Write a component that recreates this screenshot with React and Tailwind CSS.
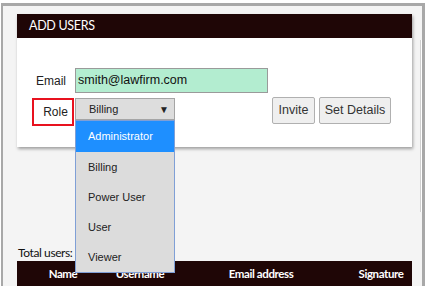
import React from 'react';

const ROLES = ['Administrator', 'Billing', 'Power User', 'User', 'Viewer'];

const COLUMNS = [
  { label: 'Name', className: 'w-[92px]' },
  { label: 'Username', className: 'w-[62px]' },
  { label: 'Email address', className: 'w-[180px]' },
  { label: 'Signature', className: 'w-[60px]' },
];

const App = () => {
  return (
    <div className="w-[427px] h-[286px] bg-white pt-[3px] pl-[1px] pr-[2px] overflow-hidden flex">
      {/* Window frame */}
      <div className="flex-1 flex border-t-[3px] border-l-[2px] border-r-[3px] border-[#a8a8a8] bg-[#f4f4f4] pt-[8px] pl-[14px]">
        <div className="w-[395px] flex flex-col" style={{ fontFamily: 'Lato, "Open Sans", sans-serif' }}>
          {/* Add users panel */}
          <section className="bg-white shadow-[1px_2px_3px_rgba(0,0,0,0.35)]">
            <header className="h-[24px] bg-[#1f0606] pl-[12px] flex items-center">
              <h2 className="text-white text-[12.5px] tracking-[-0.3px]">ADD USERS</h2>
            </header>

            <div
              className="h-[109px] pt-[30px] pl-[15px] flex flex-col gap-[5px]"
              style={{ fontFamily: '"Liberation Sans", Arial, sans-serif' }}
            >
              <div className="flex items-center">
                <label className="w-[42px] pr-[8px] text-right text-[12px] text-[#222]">Email</label>
                <div className="ml-[1px] w-[193px] h-[25px] bg-[#b3edd0] border border-[#9a9a9a] pl-[2px] flex items-center text-[12.5px] text-[#111]">
                  smith@lawfirm.com
                </div>
              </div>

              <div className="flex items-start">
                <div className="w-[42px] h-[28px] border-2 border-[#e8121f] flex items-center justify-center text-[12px] text-[#222] pl-[5px]">
                  Role
                </div>

                {/* Open select */}
                <div className="relative ml-[1px] w-[100px]">
                  <div className="h-[22px] bg-[#dddddd] border border-[#a5a5a5] pl-[13px] pr-[5px] flex items-center justify-between text-[11px] text-[#222]">
                    <span>Billing</span>
                    <span className="text-[10px] text-[#222]">▼</span>
                  </div>
                  <ul className="absolute z-10 top-[22px] left-0 w-[100px] bg-[#dcdcdc] border border-[#7f9fd6] text-[11px] text-[#222]">
                    {ROLES.map((role, i) => (
                      <li
                        key={role}
                        className={
                          i === 0
                            ? 'h-[31px] bg-[#1e8fff] text-white pl-[12px] flex items-center'
                            : 'h-[30px] pl-[12px] flex items-center'
                        }
                      >
                        {role}
                      </li>
                    ))}
                  </ul>
                </div>

                <div className="ml-[97px] -mt-[1px] flex gap-[4px]">
                  <button className="w-[43px] h-[27px] bg-[#efefef] border border-[#b0b0b0] rounded-[2px] text-[12.5px] text-[#333]">
                    Invite
                  </button>
                  <button className="w-[72px] h-[27px] bg-[#efefef] border border-[#b0b0b0] rounded-[2px] text-[12.5px] text-[#333]">
                    Set Details
                  </button>
                </div>
              </div>
            </div>
          </section>

          {/* Users table */}
          <p className="mt-[98px] pl-[1px] text-[12px] tracking-[-0.4px] leading-[16px] text-[#111]">Total users:</p>
          <div className="h-[26px] bg-[#1f0606] flex items-center text-white text-[11.5px] tracking-[-0.4px] font-bold">
            {COLUMNS.map((col) => (
              <span key={col.label} className={`${col.className} text-center`}>
                {col.label}
              </span>
            ))}
          </div>
        </div>

        {/* Scrollbar */}
        <div className="ml-[1px] w-[9px] pt-[26px]">
          <div className="ml-auto w-[2px] h-[172px] border-l border-[#d0d0d0] bg-white" />
        </div>
      </div>
    </div>
  );
};

export default App;
